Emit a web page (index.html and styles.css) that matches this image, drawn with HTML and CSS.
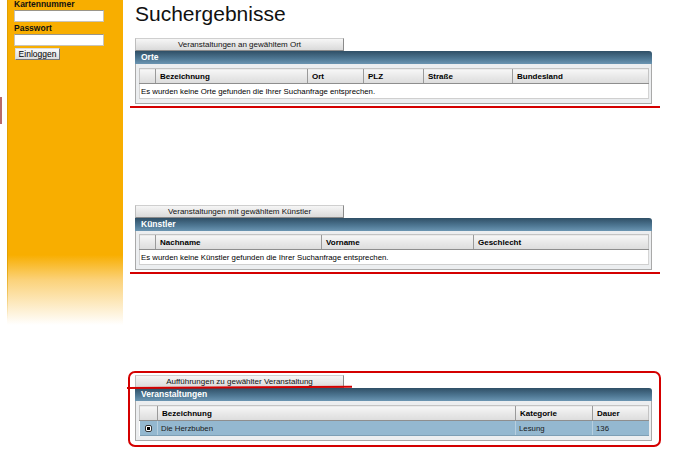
FILE: index.html
```html
<!DOCTYPE html>
<html lang="de">
<head>
<meta charset="utf-8">
<title>Suchergebnisse</title>
<link rel="stylesheet" href="styles.css">
</head>
<body>
<div class="page">
  <div class="edge-mark"></div>
  <aside class="sidebar">
    <div class="label first">Kartennummer</div>
    <div class="field"></div>
    <div class="label">Passwort</div>
    <div class="field"></div>
    <div class="login">Einloggen</div>
  </aside>
  <main class="main">
    <h1 class="title">Suchergebnisse</h1>

    <section class="result s1">
      <div class="tab">Veranstaltungen an gewähltem Ort</div>
      <div class="panel">
        <div class="panel-head">Orte</div>
        <div class="panel-body">
          <table class="grid">
            <colgroup><col class="c16"><col class="c152"><col class="c56"><col class="c60"><col class="c89"><col></colgroup>
            <tr class="head"><th></th><th>Bezeichnung</th><th>Ort</th><th>PLZ</th><th>Straße</th><th>Bundesland</th></tr>
            <tr class="row"><td colspan="6" class="msg">Es wurden keine Orte gefunden die Ihrer Suchanfrage entsprechen.</td></tr>
          </table>
        </div>
      </div>
      <div class="redline"></div>
    </section>

    <section class="result s2">
      <div class="tab">Veranstaltungen mit gewähltem Künstler</div>
      <div class="panel">
        <div class="panel-head">Künstler</div>
        <div class="panel-body">
          <table class="grid">
            <colgroup><col class="c16"><col class="c166"><col class="c152"><col></colgroup>
            <tr class="head"><th></th><th>Nachname</th><th>Vorname</th><th>Geschlecht</th></tr>
            <tr class="row"><td colspan="4" class="msg">Es wurden keine Künstler gefunden die Ihrer Suchanfrage entsprechen.</td></tr>
          </table>
        </div>
      </div>
      <div class="redline"></div>
    </section>

    <section class="result s3">
      <div class="tab">Aufführungen zu gewählter Veranstaltung</div>
      <div class="tab-mark"></div>
      <div class="panel">
        <div class="panel-head">Veranstaltungen</div>
        <div class="panel-body">
          <table class="grid">
            <colgroup><col class="c18"><col class="c358"><col class="c77"><col></colgroup>
            <tr class="head"><th></th><th>Bezeichnung</th><th>Kategorie</th><th>Dauer</th></tr>
            <tr class="row selected"><td class="radio-cell"><span class="radio"></span></td><td>Die Herzbuben</td><td>Lesung</td><td>136</td></tr>
          </table>
        </div>
      </div>
    </section>
  </main>
</div>
</body>
</html>
```

FILE: styles.css
```css
* { box-sizing: border-box; }
html, body { margin: 0; padding: 0; background: #fff; }
body { font-family: "Liberation Sans", Arial, sans-serif; color: #000; }

.page { display: flex; align-items: flex-start; }

.edge-mark {
  width: 2px;
  height: 27px;
  margin-top: 97px;
  margin-right: 5px;
  background: #b86a6a;
}

.sidebar {
  width: 116px;
  height: 328px;
  padding: 0 0 0 7px;
  background:
    linear-gradient(to bottom, #e2a000 0, #e2a000 255px, rgba(255,255,255,0) 320px) left top / 1px 100% no-repeat,
    linear-gradient(to bottom, #f8ae00 0, #f8ae00 255px, #fbd27a 280px, #fff 325px);
  display: flex;
  flex-direction: column;
  align-items: flex-start;
}
.label {
  font-size: 8.5px;
  font-weight: bold;
  line-height: 9px;
  height: 10px;
  color: #111;
}
.label.first { margin-top: 0; height: 10px; }
.field {
  width: 90px;
  height: 12px;
  background: #fff;
  border: 1px solid #c9c4b8;
  border-top-color: #9a9588;
  margin-bottom: 2px;
}
.login {
  margin-left: 1px;
  width: 45px;
  height: 12px;
  font-size: 8.5px;
  line-height: 10px;
  text-align: center;
  background: linear-gradient(#fafafa, #dcdcdc);
  border: 1px solid #777;
  border-top-color: #ddd;
  border-left-color: #ddd;
}

.main {
  padding-left: 12px;
  width: 530px;
}
.title {
  margin: 0;
  padding-top: 1px;
  font-size: 21px;
  font-weight: normal;
  line-height: 25px;
  height: 38px;
  color: #111;
}

.result { position: relative; width: 517px; }
.s2 { margin-top: 97px; }
.s3 {
  margin-top: 97px;
  margin-left: -7px;
  width: 533px;
  padding: 2px 7px 4px 5px;
  border: 2px solid #d40000;
  border-radius: 7px;
}

.tab {
  width: 209px;
  height: 13px;
  font-size: 8px;
  line-height: 11px;
  text-align: center;
  color: #111;
  background: linear-gradient(#f6f6f6, #dadada);
  border: 1px solid #8a8a8a;
  border-top-color: #cfcfcf;
  border-left-color: #bdbdbd;
}
.tab-mark {
  position: absolute;
  left: -3px;
  top: 14px;
  width: 225px;
  height: 2px;
  background: #d40000;
  transform: rotate(-0.3deg);
  transform-origin: left center;
}

.panel { width: 517px; }
.panel-head {
  height: 13px;
  padding-left: 6px;
  font-size: 8.5px;
  font-weight: bold;
  line-height: 13px;
  color: #fff;
  background: linear-gradient(#2f4f66, #4f7894 60%, #6b95b2);
  border-top-right-radius: 3px;
}
.panel-body {
  background: #eceef0;
  border: 1px solid #a9a9a9;
  border-top: none;
  padding: 4px 2px 4px 3px;
}
.s2 .panel-body { padding-top: 3px; }

.grid {
  width: 510px;
  table-layout: fixed;
  border-collapse: collapse;
  font-size: 7.8px;
  background: #fff;
}
.c16 { width: 16px; }
.c18 { width: 18px; }
.c152 { width: 152px; }
.c56 { width: 56px; }
.c60 { width: 60px; }
.c89 { width: 89px; }
.c166 { width: 166px; }
.c358 { width: 358px; }
.c77 { width: 77px; }

.grid th {
  height: 15px;
  padding: 0 0 0 4px;
  text-align: left;
  font-weight: bold;
  font-size: 8px;
  background: linear-gradient(#f7f7f7, #e9e9e9 50%, #dcdcdc);
  border-top: 1px solid #c4c4c4;
  border-bottom: 1px solid #8e8e8e;
  border-left: 1px solid #9a9a9a;
}
.grid th:first-child { border-left: 1px solid #c4c4c4; }
.grid th:last-child { border-right: 1px solid #c4c4c4; }
.grid td {
  height: 15px;
  padding: 0 0 0 3px;
  white-space: nowrap;
  overflow: hidden;
  border-bottom: 1px solid #cfcfcf;
}
.grid td.msg { padding-left: 1px; border-left: 1px solid #d4d4d4; border-right: 1px solid #d4d4d4; }

.selected td {
  background: #94b8d0;
  border-bottom: 1px solid #7e9fb5;
  color: #1a1a1a;
}
.selected td + td { border-left: 1px solid #b7cfdf; }
.radio-cell { text-align: center; padding: 0 !important; }
.radio {
  display: inline-block;
  width: 7px;
  height: 7px;
  border: 1px solid #333;
  border-radius: 2px;
  background: radial-gradient(circle, #000 0, #000 1.5px, #fff 2px);
  vertical-align: middle;
}

.redline {
  height: 2px;
  margin: 2px -8px 0 -5px;
  background: #d40000;
}
```
